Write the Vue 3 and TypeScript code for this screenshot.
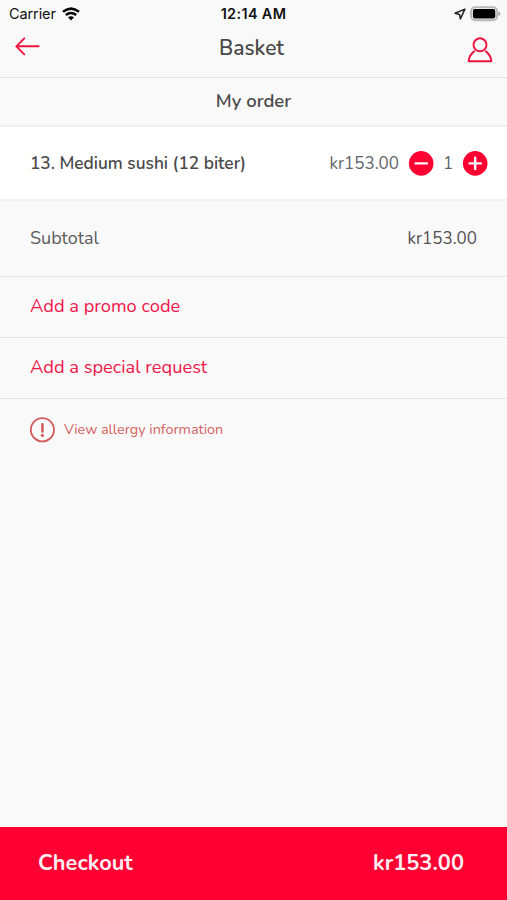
<script setup lang="ts">
import { computed, ref } from 'vue'

const unitPrice = 153
const quantity = ref(1)
const total = computed(() => `kr${(unitPrice * quantity.value).toFixed(2)}`)

function decrease(): void {
  if (quantity.value > 0) quantity.value--
}
function increase(): void {
  quantity.value++
}
</script>

<template>
  <main class="screen">
    <div class="status">
      <div class="carrier">
        <span class="carrier-name">Carrier</span>
        <svg class="wifi" width="18" height="14" viewBox="0 0 18 14">
          <path d="M1 4.8Q9-1.6 17 4.8M3.8 8Q9 3.9 14.2 8" fill="none" stroke="#050505" stroke-width="2.5" />
          <path d="M6 10.3Q9 8 12 10.3L9 13.5Z" fill="#050505" />
        </svg>
      </div>
      <span class="clock">12:14 AM</span>
      <div class="indicators">
        <svg width="12" height="12" viewBox="0 0 12 12">
          <path d="M10.9 1.1L1 5.3l4.5 1.1.9 4.5Z" fill="none" stroke="#222" stroke-width="1.5" stroke-linejoin="round" />
        </svg>
        <svg width="31" height="16" viewBox="0 0 31 16">
          <rect x="1.1" y="1.2" width="26" height="13" rx="4" fill="#f9f9f9" stroke="#b8b8b8" stroke-width="1.9" />
          <rect x="2.9" y="3" width="22.4" height="9.4" rx="1.8" fill="#000" />
          <path d="M28.4 5.3q2 .9 2 2.5t-2 2.5Z" fill="#aaa" />
        </svg>
      </div>
    </div>

    <header class="nav">
      <button class="icon-button back" aria-label="Back">
        <svg width="26" height="20" viewBox="0 0 26 20">
          <path d="M24.6 10.3H2.5M10.3 2.3L2.3 10.3l8 8" fill="none" stroke="#ee123f" stroke-width="1.9" stroke-linecap="round" stroke-linejoin="round" />
        </svg>
      </button>
      <h1 class="title">Basket</h1>
      <button class="icon-button account" aria-label="Account">
        <svg width="26" height="26" viewBox="0 0 26 26">
          <circle cx="13" cy="7.8" r="6.5" fill="none" stroke="#ee123f" stroke-width="1.9" />
          <path d="M7.3 14.4Q2.4 17.6 1.6 24.3H24.4Q23.6 17.6 18.7 14.4" fill="none" stroke="#ee123f" stroke-width="1.9" stroke-linejoin="round" stroke-linecap="round" />
        </svg>
      </button>
    </header>

    <h2 class="section"><span>My order</span></h2>

    <section class="item">
      <span class="item-name">13. Medium sushi (12 biter)</span>
      <span class="item-price">{{ total }}</span>
      <button class="icon-button" aria-label="Remove one" @click="decrease">
        <svg width="26" height="26" viewBox="0 0 26 26">
          <circle cx="13.2" cy="13.4" r="12.3" fill="#ff0032" />
          <path d="M7.6 13.4h11.2" stroke="#fff" stroke-width="2.4" stroke-linecap="round" />
        </svg>
      </button>
      <span class="quantity">{{ quantity }}</span>
      <button class="icon-button" aria-label="Add one" @click="increase">
        <svg width="26" height="26" viewBox="0 0 26 26">
          <circle cx="13.2" cy="13.4" r="12.3" fill="#ff0032" />
          <path d="M7.6 13.4h11.2M13.2 7.8v11.2" stroke="#fff" stroke-width="2.4" stroke-linecap="round" />
        </svg>
      </button>
    </section>

    <section class="subtotal">
      <span class="subtotal-label">Subtotal</span>
      <span class="subtotal-price">{{ total }}</span>
    </section>

    <a class="action promo"><span>Add a promo code</span></a>
    <a class="action request"><span>Add a special request</span></a>

    <a class="allergy">
      <svg width="26" height="26" viewBox="0 0 26 26">
        <circle cx="13.4" cy="12.8" r="11.6" fill="none" stroke="#d35a5a" stroke-width="1.8" />
        <path d="M13.4 7.3v7.3" stroke="#d35a5a" stroke-width="2.5" stroke-linecap="round" />
        <circle cx="13.4" cy="18.4" r="1.6" fill="#d35a5a" />
      </svg>
      <span class="allergy-label">View allergy information</span>
    </a>

    <footer class="checkout">
      <span class="checkout-label">Checkout</span>
      <span class="checkout-total">{{ total }}</span>
    </footer>
  </main>
</template>

<style>
body {
  margin: 0;
  background: #f9f9f9;
}
</style>

<style scoped>
.screen {
  display: flex;
  flex-direction: column;
  height: 900px;
  overflow: hidden;
  box-sizing: border-box;
  background: #f9f9f9;
  color: #4a4a4a;
  font-family: Nunito, "Noto Sans", sans-serif;
  white-space: nowrap;
}
.screen * {
  box-sizing: border-box;
}
.status {
  display: grid;
  grid-template-columns: 1fr auto 1fr;
  align-items: center;
  height: 27px;
  padding: 0 6px 0 9px;
  font-family: Inter, sans-serif;
  color: #111;
}
.carrier {
  display: flex;
  align-items: center;
  gap: 6px;
}
.carrier-name {
  font-size: 14.5px;
  letter-spacing: -0.1px;
}
.clock {
  padding-right: 3px;
  font-size: 14.4px;
  font-weight: 600;
  letter-spacing: 0.38px;
}
.indicators {
  display: flex;
  align-items: center;
  justify-content: flex-end;
  gap: 4px;
}
.nav {
  display: grid;
  grid-template-columns: 26px 1fr 26px;
  align-items: center;
  height: 51px;
  padding: 0 14px 8px;
  border-bottom: 1px solid #e3e3e3;
}
.icon-button {
  display: flex;
  padding: 0;
  border: 0;
  background: none;
  cursor: pointer;
}
.back {
  padding-bottom: 4px;
}
.account {
  padding-top: 3px;
}
.title {
  margin: 0;
  padding-right: 4px;
  text-align: center;
  font-size: 20.9px;
  font-weight: 600;
}
.section {
  display: flex;
  align-items: center;
  justify-content: center;
  height: 49px;
  margin: 0;
  padding-bottom: 1px;
  border-bottom: 2px solid #efefef;
  font-size: 18.5px;
  font-weight: 600;
}
.item {
  display: flex;
  align-items: center;
  height: 74px;
  padding: 0 19px 0 30px;
  border-bottom: 2px solid #f1f1f1;
  background: #fff;
}
.item-name {
  flex: 1;
  font-size: 17.3px;
  font-weight: 600;
}
.item-price {
  margin-right: 9px;
  font-size: 17px;
  color: #606468;
}
.quantity {
  width: 28px;
  text-align: center;
  font-size: 17px;
  color: #606468;
}
.subtotal {
  display: flex;
  align-items: center;
  justify-content: space-between;
  height: 76px;
  padding: 0 30px;
  border-bottom: 1px solid #e3e3e3;
}
.subtotal-label {
  padding-bottom: 2px;
  font-size: 18px;
  color: #5c5c5c;
}
.subtotal-price {
  font-size: 17px;
  color: #505050;
}
.action {
  display: flex;
  align-items: center;
  height: 61px;
  padding: 0 0 2px 30px;
  border-bottom: 1px solid #e3e3e3;
  font-size: 18.3px;
  color: #ee174b;
}
.allergy {
  display: flex;
  align-items: center;
  gap: 9px;
  height: 62px;
  padding-left: 29px;
  color: #d46262;
}
.allergy-label {
  padding-bottom: 2px;
  font-size: 14.4px;
}
.checkout {
  display: flex;
  align-items: center;
  justify-content: space-between;
  height: 73px;
  margin-top: auto;
  padding: 0 43px 2px 38px;
  background: #ff0032;
  color: #ffeef1;
  font-size: 21.8px;
  font-weight: 700;
}
</style>
